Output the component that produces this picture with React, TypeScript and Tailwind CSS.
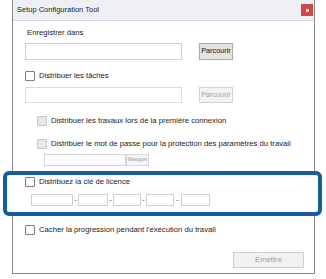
import React from "react";

function Box({ disabled = false }: { disabled?: boolean }) {
  return (
    <span
      className={
        disabled
          ? "block w-[10px] h-[10px] border border-[#c6c6c6] bg-[#e8e8e8] rounded-[1px] shrink-0"
          : "block w-[10px] h-[10px] border border-[#7f7f7f] bg-white rounded-[1px] shrink-0"
      }
    />
  );
}

function Field({ w }: { w: string }) {
  return <div className={`${w} h-[12px] border border-[#d0d0d0] bg-white`} />;
}

export default function App() {
  return (
    <div
      className="w-[326px] h-[279px] bg-white overflow-hidden text-[7.7px] text-[#1a1a1a] whitespace-nowrap"
      style={{ fontFamily: '"Liberation Sans", Arial, sans-serif' }}
    >
      <div className="ml-[12px] w-[303px] h-[274px] border border-[#888] border-t-0 flex flex-col">
        {/* Title bar */}
        <div className="h-[21px] bg-[#eef0f6] border-b border-[#d6d9df] flex items-center pl-[4px] pr-[1px] shrink-0">
          <span className="text-[7.5px] text-[#222]">Setup Configuration Tool</span>
          <div className="ml-auto w-[12px] h-[12px] bg-[#cd4a4a] flex items-center justify-center">
            <span className="block w-[3px] h-[3px] bg-[#f4d0d0]" />
          </div>
        </div>

        {/* Content */}
        <div className="flex flex-col pl-[12px] pr-[10px]">
          <div className="mt-[6px] h-[12px] leading-[12px] pl-[2px]">Enregistrer dans</div>
          <div className="mt-[4px] flex items-center">
            <div className="w-[157px] h-[17px] border border-[#cfcfcf] bg-white" />
            <div className="ml-[17px] w-[34px] h-[17px] border border-[#a9a9a9] bg-[#e3e3e3] flex items-center justify-center text-[#111] text-[7.3px]">
              Parcourir
            </div>
          </div>

          <div className="mt-[10px] h-[12px] flex items-center gap-[4px]">
            <Box />
            <span>Distribuer les tâches</span>
          </div>
          <div className="mt-[5px] flex items-center">
            <div className="w-[157px] h-[16px] border border-[#dcdcdc] bg-white" />
            <div className="ml-[17px] w-[34px] h-[16px] border border-[#d2d2d2] bg-[#f3f3f3] flex items-center justify-center text-[#a3a3a3] text-[7.3px]">
              Parcourir
            </div>
          </div>

          <div className="mt-[12px] h-[12px] flex items-center gap-[4px] pl-[12px]">
            <Box disabled />
            <span>Distribuer les travaux lors de la première connexion</span>
          </div>
          <div className="mt-[11px] h-[12px] flex items-center gap-[4px] pl-[12px]">
            <Box disabled />
            <span>Distribuer le mot de passe pour la protection des paramètres du travail</span>
          </div>
          <div className="mt-[4px] flex items-center pl-[19px]">
            <div className="w-[82px] h-[12px] border border-[#d6d6d6] bg-white" />
            <div className="w-[23px] h-[12px] border border-[#d6d6d6] bg-[#f6f6f6] flex items-center justify-center text-[#9a9a9a] text-[5px]">
              Masquer
            </div>
          </div>

          {/* Highlighted licence section */}
          <div className="mt-[5px] -ml-[22px] w-[319px] h-[45px] border-[4px] border-[#185c9f] rounded-[6px] bg-white flex flex-col pl-[18px]">
            <div className="mt-[1px] h-[12px] flex items-center gap-[4px]">
              <Box />
              <span>Distribuez la clé de licence</span>
            </div>
            <div className="mt-[6px] flex items-center pl-[6px]">
              <Field w="w-[42px]" />
              <span className="w-[5px] text-center text-[#555]">-</span>
              <Field w="w-[30px]" />
              <span className="w-[5px] text-center text-[#555]">-</span>
              <Field w="w-[28px]" />
              <span className="w-[5px] text-center text-[#555]">-</span>
              <Field w="w-[28px]" />
              <span className="w-[7px] text-center text-[#555]">-</span>
              <Field w="w-[29px]" />
            </div>
          </div>

          <div className="mt-[8px] h-[12px] flex items-center gap-[4px]">
            <Box />
            <span>Cacher la progression pendant l'exécution du travail</span>
          </div>

          <div className="mt-[16px] flex justify-end">
            <div className="w-[71px] h-[16px] border border-[#d0d0d0] bg-[#f2f2f2] flex items-center justify-center text-[#9c9c9c]">
              Émettre
            </div>
          </div>
        </div>
      </div>
    </div>
  );
}
